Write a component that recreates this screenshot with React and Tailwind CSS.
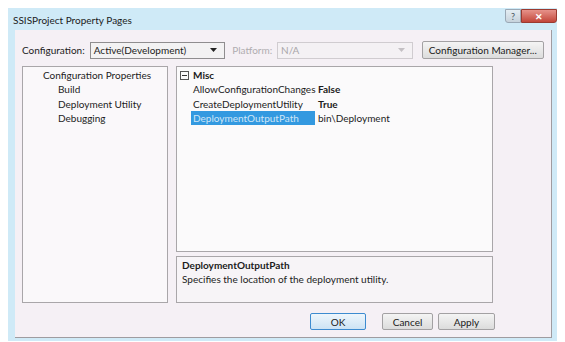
const font = { fontFamily: 'Lato, "Open Sans", sans-serif' }

function Combo({ text, disabled, width }) {
  return (
    <div
      className={`flex items-center justify-between h-[17px] border px-[3px] ${width} ${
        disabled ? 'border-[#d0ccd0] bg-[#f4f1f4] text-[#a9a6a9]' : 'border-[#8f8d8f] bg-[#f3f2f3] text-[#1c1c1c]'
      }`}
    >
      <span className="text-[10px] leading-none">{text}</span>
      <svg width="7" height="4" viewBox="0 0 7 4" className="mr-[4px]">
        <path d="M0 0h7L3.5 4z" fill={disabled ? '#c4c0c4' : '#222'} />
      </svg>
    </div>
  )
}

function Button({ children, primary, className = '' }) {
  return (
    <button
      className={`h-[17px] rounded-[2px] border text-[10px] leading-none text-[#1a1a1a] ${
        primary ? 'border-[#3d8bd0] bg-gradient-to-b from-[#eef6fc] to-[#cde3f4]' : 'border-[#a3a1a3] bg-gradient-to-b from-[#f4f4f4] to-[#dcdcdc]'
      } ${className}`}
    >
      {children}
    </button>
  )
}

const rows = [
  { name: 'AllowConfigurationChanges', value: 'False', bold: true },
  { name: 'CreateDeploymentUtility', value: 'True', bold: true },
  { name: 'DeploymentOutputPath', value: 'bin\\Deployment', selected: true },
]

export default function App() {
  return (
    <div className="w-[565px] h-[342px] bg-white pl-[8px] pt-[8px]" style={font}>
      <div className="w-[549px] h-[333px] bg-[#cfeaf7] flex flex-col pl-[7px] pr-[5px] pb-[3px]">
        {/* title bar */}
        <div className="h-[22px] flex items-start justify-between">
          <span className="text-[10px] text-[#1b1b1b] mt-[5px] -ml-[2px]">SSISProject Property Pages</span>
          <div className="flex mt-[1px] -mr-[5px]">
            <div className="w-[16px] h-[14px] rounded-bl-[3px] border border-[#9aa8b5] bg-gradient-to-b from-[#e4edf3] to-[#c7d3dc] flex items-center justify-center text-[9px] leading-none text-[#4a5560]">
              ?
            </div>
            <div className="w-[36px] h-[14px] rounded-br-[3px] border border-[#9a3a30] bg-gradient-to-b from-[#e6928a] to-[#c2453a] flex items-center justify-center text-[9px] font-bold leading-none text-white">
              ✕
            </div>
          </div>
        </div>

        {/* client */}
        <div className="flex-1 bg-[#f5f0f5] border-r border-b border-[#9f9ca0] flex flex-col px-[7px] pt-[11px]">
          <div className="flex items-center h-[18px]">
            <span className="text-[10px] text-[#1c1c1c] w-[68px]">Configuration:</span>
            <Combo text="Active(Development)" width="w-[136px]" />
            <span className="text-[10px] text-[#b0adb0] ml-[7px] w-[45px]">Platform:</span>
            <Combo text="N/A" disabled width="w-[136px]" />
            <Button className="ml-[9px] w-[123px] h-[18px]">Configuration Manager...</Button>
          </div>

          <div className="flex mt-[7px] gap-[8px]">
            {/* tree */}
            <div className="w-[146px] h-[237px] border border-[#a9a6a9] bg-[#faf8fa] pt-px text-[10px] text-[#1c1c1c] leading-[14.3px]">
              <div className="pl-[20px]">Configuration Properties</div>
              <div className="pl-[35px]">Build</div>
              <div className="pl-[35px]">Deployment Utility</div>
              <div className="pl-[35px]">Debugging</div>
            </div>

            {/* property grid */}
            <div className="w-[317px] flex flex-col gap-[4px]">
              <div className="h-[186px] border border-[#a9a6a9] bg-[#fbfafb] pt-px text-[10px] text-[#1c1c1c] leading-[14.3px]">
                <div className="flex items-center">
                  <div className="ml-[3px] w-[9px] h-[9px] border border-[#555] flex items-center justify-center">
                    <div className="w-[5px] h-px bg-[#333]" />
                  </div>
                  <span className="ml-[4px] font-bold">Misc</span>
                </div>
                {rows.map((r) => (
                  <div key={r.name} className="flex">
                    <div
                      className={`ml-[14px] w-[124px] pl-[2px] ${r.selected ? 'bg-[#3399e0] text-[#cfe6f7]' : ''}`}
                    >
                      {r.name}
                    </div>
                    <div className={`pl-[3px] ${r.bold ? 'font-bold' : ''}`}>{r.value}</div>
                  </div>
                ))}
              </div>
              <div className="h-[47px] border border-[#a9a6a9] bg-[#f7f4f7] px-[5px] pt-px text-[10px] text-[#1c1c1c] leading-[14.3px]">
                <div className="font-bold">DeploymentOutputPath</div>
                <div>Specifies the location of the deployment utility.</div>
              </div>
            </div>
          </div>

          <div className="flex mt-[10px] ml-[288px] gap-[16px]">
            <Button primary className="w-[56px]">OK</Button>
            <div className="flex gap-[5px]">
              <Button className="w-[51px]">Cancel</Button>
              <Button className="w-[57px]">Apply</Button>
            </div>
          </div>
        </div>
      </div>
    </div>
  )
}
